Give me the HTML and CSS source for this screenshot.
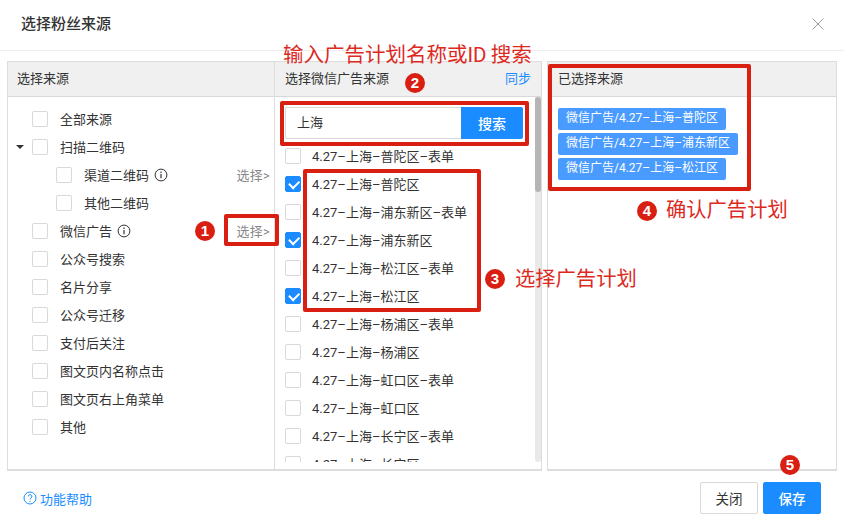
FILE: index.html
```html
<!DOCTYPE html>
<html lang="zh-CN">
<head>
<meta charset="utf-8">
<title>选择粉丝来源</title>
<link rel="stylesheet" href="styles.css">
</head>
<body>
<div class="dialog">
  <header class="dialog-head">
    <h1 class="dialog-title">选择粉丝来源</h1>
    <svg class="close" width="12" height="12" viewBox="0 0 12 12"><path d="M.5.5l11 11M11.500.5l-11 11" fill="none" stroke="#9a9a9a" stroke-width="1"/></svg>
  </header>
  <main class="panels">
    <section class="panel panel-left">
      <div class="panel-head">选择来源</div>
      <div class="tree">
        <div class="row"><i class="cb"></i><span>全部来源</span></div>
        <div class="row"><i class="caret"></i><i class="cb"></i><span>扫描二维码</span></div>
        <div class="row child"><i class="cb"></i><span>渠道二维码</span><svg class="info" width="14" height="14" viewBox="0 0 14 14"><circle cx="7" cy="7" r="5.9" fill="none" stroke="#333" stroke-width="1"/><path d="M7 6v4.300" stroke="#333" stroke-width="1.200"/><circle cx="7" cy="4.200" r=".8" fill="#333"/></svg><a class="pick">选择&gt;</a></div>
        <div class="row child"><i class="cb"></i><span>其他二维码</span></div>
        <div class="row"><i class="cb"></i><span>微信广告</span><svg class="info" width="14" height="14" viewBox="0 0 14 14"><circle cx="7" cy="7" r="5.9" fill="none" stroke="#333" stroke-width="1"/><path d="M7 6v4.300" stroke="#333" stroke-width="1.200"/><circle cx="7" cy="4.200" r=".8" fill="#333"/></svg><a class="pick">选择&gt;</a></div>
        <div class="row"><i class="cb"></i><span>公众号搜索</span></div>
        <div class="row"><i class="cb"></i><span>名片分享</span></div>
        <div class="row"><i class="cb"></i><span>公众号迁移</span></div>
        <div class="row"><i class="cb"></i><span>支付后关注</span></div>
        <div class="row"><i class="cb"></i><span>图文页内名称点击</span></div>
        <div class="row"><i class="cb"></i><span>图文页右上角菜单</span></div>
        <div class="row"><i class="cb"></i><span>其他</span></div>
      </div>
    </section>
    <section class="panel panel-mid">
      <div class="panel-head"><span>选择微信广告来源</span><a class="sync">同步</a></div>
      <div class="mid-body">
        <div class="mid-content">
          <div class="search"><div class="search-input">上海</div><button class="search-btn">搜索</button></div>
          <div class="plans">
            <div class="plan"><i class="cb"></i><span>4.27–上海–普陀区–表单</span></div>
            <div class="plan"><i class="cb on"></i><span>4.27–上海–普陀区</span></div>
            <div class="plan"><i class="cb"></i><span>4.27–上海–浦东新区–表单</span></div>
            <div class="plan"><i class="cb on"></i><span>4.27–上海–浦东新区</span></div>
            <div class="plan"><i class="cb"></i><span>4.27–上海–松江区–表单</span></div>
            <div class="plan"><i class="cb on"></i><span>4.27–上海–松江区</span></div>
            <div class="plan"><i class="cb"></i><span>4.27–上海–杨浦区–表单</span></div>
            <div class="plan"><i class="cb"></i><span>4.27–上海–杨浦区</span></div>
            <div class="plan"><i class="cb"></i><span>4.27–上海–虹口区–表单</span></div>
            <div class="plan"><i class="cb"></i><span>4.27–上海–虹口区</span></div>
            <div class="plan"><i class="cb"></i><span>4.27–上海–长宁区–表单</span></div>
            <div class="plan"><i class="cb"></i><span>4.27–上海–长宁区</span></div>
          </div>
        </div>
        <div class="scrollbar"><div class="thumb"></div></div>
      </div>
    </section>
    <section class="panel panel-right">
      <div class="panel-head">已选择来源</div>
      <div class="tags">
        <span class="tag">微信广告/4.27–上海–普陀区</span>
        <span class="tag">微信广告/4.27–上海–浦东新区</span>
        <span class="tag">微信广告/4.27–上海–松江区</span>
      </div>
    </section>
  </main>
  <footer class="dialog-foot">
    <a class="help"><svg width="14" height="14" viewBox="0 0 14 14"><circle cx="7" cy="7" r="6" fill="none" stroke="#1a8cff" stroke-width="1"/><path d="M5.300 5.500a1.800 1.800 0 1 1 2.700 1.500c-.7.400-1 .8-1 1.500" fill="none" stroke="#1a8cff" stroke-width="1"/><circle cx="7" cy="10.300" r=".6" fill="#1a8cff"/></svg>功能帮助</a>
    <div class="foot-btns">
      <button class="btn">关闭</button>
      <button class="btn btn-primary">保存</button>
    </div>
  </footer>

  <div class="mark box-1"></div>
  <div class="mark box-2"></div>
  <div class="mark box-3"></div>
  <div class="mark box-4"></div>
  <b class="num num-1">1</b>
  <b class="num num-2">2</b>
  <b class="num num-3">3</b>
  <b class="num num-4">4</b>
  <b class="num num-5">5</b>
  <div class="note note-2">输入广告计划名称或ID&#8201;搜索</div>
  <div class="note note-3">选择广告计划</div>
  <div class="note note-4">确认广告计划</div>
</div>
</body>
</html>
```
FILE: styles.css
```css
* { box-sizing: border-box; }
html, body { margin: 0; padding: 0; background: #fff; }
body { font-family: Roboto, "Noto Sans CJK SC", sans-serif; font-size: 13px; color: #333; }
.dialog { position: relative; width: 844px; height: 528px; overflow: hidden; background: #fff; display: flex; flex-direction: column; }
.dialog-head { height: 51px; border-bottom: 1px solid #eee; display: flex; justify-content: space-between; align-items: flex-start; padding: 0 20px 0 21px; flex: none; }
.dialog-title { margin: 14px 0 0; font-size: 15px; line-height: 20px; font-weight: 500; color: #333; }
.close { margin-top: 18px; }
.panels { display: flex; height: 410px; margin: 10px 7px 0; flex: none; }
.panel { display: flex; flex-direction: column; border: 1px solid #ddd; border-bottom-width: 2px; min-width: 0; }
.panel-left { width: 268px; }
.panel-mid { width: 268px; margin-left: -1px; }
.panel-right { flex: 1; margin-left: 5px; }
.panel-head { height: 35px; flex: none; background: #f0f0f0; border-bottom: 1px solid #d9d9d9; display: flex; align-items: center; justify-content: space-between; padding: 0 10px; line-height: 34px; color: #333; }
.panel-left .panel-head { padding-left: 9px; }
.tree { padding-top: 8px; }
.row { display: flex; align-items: center; height: 28px; padding-left: 24px; padding-right: 4px; }
.row.child { padding-left: 48px; }
.row > span { margin-left: 12px; padding-bottom: 2px; }
.cb { display: block; flex: none; width: 16px; height: 16px; border: 1px solid #d9d9d9; border-radius: 2px; background: #fff; position: relative; }
.cb.on { background: #1a8cff; border-color: #1a8cff; }
.cb.on::after { content: ""; position: absolute; left: 3px; top: 2.500px; width: 8px; height: 4.500px; border-left: 2px solid #fff; border-bottom: 2px solid #fff; transform: rotate(-45deg); }
.caret { display: block; flex: none; width: 0; height: 0; margin-left: -16px; margin-right: 8px; border-left: 4px solid transparent; border-right: 4px solid transparent; border-top: 4px solid #333; }
.info { margin-left: 5px; flex: none; }
.pick { margin-left: auto; color: #888; padding-bottom: 2px; letter-spacing: .2px; }
.sync { color: #1a8cff; }
.mid-body { display: flex; flex: 1; min-height: 0; }
.mid-content { flex: 1; min-width: 0; height: 365px; overflow: hidden; padding: 10px 0 0 10px; }
.search { display: flex; width: 238px; height: 32px; }
.search-input { flex: 1; border: 1px solid #d9d9d9; border-right: 0; border-radius: 2px 0 0 2px; padding-left: 11px; line-height: 30px; color: #333; }
.search-btn { width: 62px; border: 0; padding: 0; border-radius: 0 2px 2px 0; background: #1a8cff; color: #fff; font: 500 14px Roboto, "Noto Sans CJK SC", sans-serif; }
.plans { margin-top: 3px; }
.plan { display: flex; align-items: center; height: 28px; }
.plan > span { margin-left: 11px; white-space: nowrap; padding-bottom: 2px; }
.scrollbar { width: 6px; height: 365px; background: #e9e9e9; border-radius: 0 0 3px 3px; flex: none; }
.thumb { height: 95px; background: #b5b5b5; border-radius: 3px; }
.tags { display: flex; flex-direction: column; align-items: flex-start; gap: 3px; padding: 11px 10px; }
.tag { height: 22px; font-size: 12px; line-height: 21px; padding: 0 8px; border-radius: 2px; background: #4a9bff; color: #fff; white-space: nowrap; }
.dialog-foot { flex: 1; display: flex; justify-content: space-between; align-items: flex-start; padding: 11px 23px 0; }
.help { display: flex; align-items: center; height: 32px; gap: 3px; color: #1a8cff; }
.foot-btns { display: flex; gap: 5px; }
.btn { width: 58px; height: 32px; padding: 0; border: 1px solid #d9d9d9; border-radius: 2px; background: #fff; color: #333; font: 13.500px Roboto, "Noto Sans CJK SC", sans-serif; }
.btn-primary { background: #1a8cff; border-color: #1a8cff; color: #fff; font-weight: 500; }
.mark { position: absolute; border: 4px solid #d91f12; border-radius: 2px; }
.box-1 { left: 224px; top: 214px; width: 55px; height: 32px; }
.box-2 { left: 280px; top: 101px; width: 249px; height: 45px; }
.box-3 { left: 303px; top: 169px; width: 178px; height: 143px; }
.box-4 { left: 548px; top: 64px; width: 203px; height: 127px; }
.num { position: absolute; width: 20px; height: 20px; border-radius: 50%; background: #d91f12; color: #fff; font: 700 15px/20px "Liberation Sans", sans-serif; text-align: center; }
.num-1 { left: 195px; top: 221px; }
.num-2 { left: 405px; top: 73px; }
.num-3 { left: 485px; top: 269px; }
.num-4 { left: 637px; top: 201px; }
.num-5 { left: 780px; top: 455px; }
.note { position: absolute; font-size: 20.300px; line-height: 28px; color: #dc2a1f; white-space: nowrap; }
.note-2 { left: 283px; top: 41px; font-size: 20.500px; }
.note-3 { left: 515px; top: 265px; }
.note-4 { left: 666px; top: 196px; }
```
